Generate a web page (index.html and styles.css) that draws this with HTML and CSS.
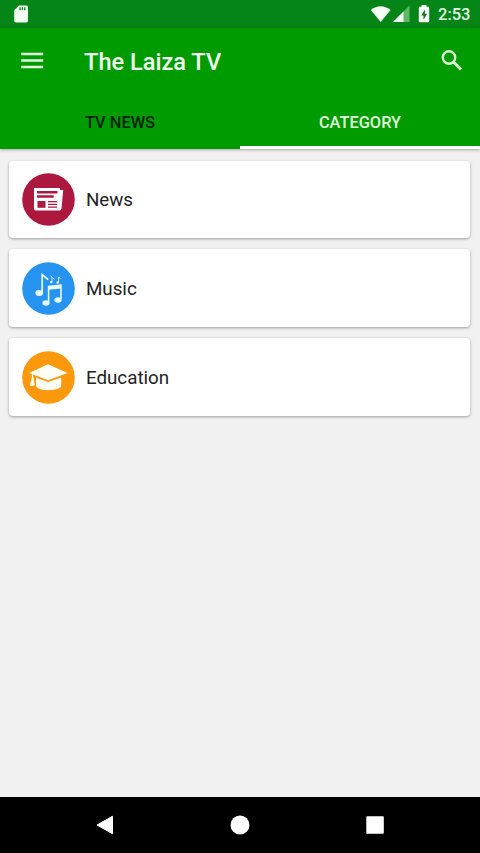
FILE: index.html
```html
<!DOCTYPE html>
<html lang="en">
<head>
<meta charset="utf-8">
<title>The Laiza TV</title>
<link rel="stylesheet" href="styles.css">
</head>
<body>
<div class="screen">
  <div class="status">
    <svg class="sd" viewBox="0 0 14 18"><path fill="#f4fff4" d="M5 .5h7.200q1.800 0 1.800 1.800v13.400q0 1.800-1.800 1.800H2q-1.800 0-1.800-1.800V5.300z"/><path stroke="#058517" stroke-width="1.300" d="M6 2.300v2.900M8.400 2.300v2.900M10.800 2.300v2.900"/></svg>
    <svg class="signals" viewBox="0 0 62 20"><path fill="#f4fff4" d="M.8 6Q10.500-1.500 20.500 6L10.700 18z"/><path fill="#5db968" d="M39.500 1.500V18H23z"/><path fill="#f4fff4" d="M33.500 7.600V18H23z"/><path fill="#f4fff4" d="M51.500 1h5v1.700h1.700q1 0 1 1V17q0 1.200-1 1.200h-8.200q-1.200 0-1.200-1.200V3.700q0-1 1-1h1.700z"/><path fill="#176b25" d="M55 5.500l-3.700 6h2.200v4.200l3.500-6h-2.200z"/></svg>
    <span class="clock">2:53</span>
  </div>
  <header class="header">
    <div class="toolbar">
      <svg class="menu" viewBox="0 0 24 18"><path stroke="#e2ffde" stroke-width="2.300" d="M1.200 2h22M1.200 8.500h22M1.200 15h22"/></svg>
      <h1 class="title">The Laiza TV</h1>
      <svg class="search" viewBox="0 0 22 22"><circle cx="8" cy="7.500" r="6.200" fill="none" stroke="#dcffd6" stroke-width="2.400"/><path stroke="#dcffd6" stroke-width="2.900" d="M12.300 11.800l7.700 7.700"/></svg>
    </div>
    <nav class="tabs">
      <div class="tab">TV NEWS</div>
      <div class="tab active">CATEGORY</div>
    </nav>
  </header>
  <main class="list">
    <div class="card">
      <svg class="icon" viewBox="0 0 53 53"><circle cx="26.500" cy="26.500" r="26.300" fill="#ad183f"/><path fill="#fff" d="M12 15h26v2h3.200l-1.700 18.500q-.2 2-2 2H14q-2 0-2-2z"/><path stroke="#ad183f" stroke-width="2.500" d="M15 19.200h20.500M15 23.500h16.700"/><path fill="#ad183f" d="M15.500 28h8v6.800h-8z"/><path stroke="#ad183f" stroke-width="1.300" d="M26 28.600h9M26 31.400h9M26 34.200h9"/></svg>
      <span>News</span>
    </div>
    <div class="card">
      <svg class="icon" viewBox="0 0 53 53"><circle cx="26.500" cy="26.500" r="26.300" fill="#2593ef"/><g fill="none" stroke="#e6faff"><path stroke-width="1.700" d="M20.200 30.500V12.500l6 5.200"/><path stroke-width="1.600" d="M26.600 40V24.500L39 23.200V37"/><path stroke-width="3" d="M26.600 26.300L39 25"/><path stroke-width=".8" d="M30 19.500v-4.500l-1.500-1M30.500 15.500l2 2M36.500 20v-5l2 1.500"/></g><g fill="#e6faff"><ellipse cx="17.200" cy="31" rx="3.900" ry="2.900"/><ellipse cx="24" cy="41" rx="3.600" ry="2.700"/><ellipse cx="36" cy="38" rx="3.600" ry="2.700"/><circle cx="29.300" cy="20" r="1.300"/><circle cx="35.700" cy="20.500" r="1.300"/></g></svg>
      <span>Music</span>
    </div>
    <div class="card">
      <svg class="icon" viewBox="0 0 53 53"><circle cx="26.500" cy="26.500" r="26.300" fill="#fb980c"/><path fill="#fffef4" d="M26 13.300L45.500 22l-19.300 7.300L7 22z"/><path fill="#fffef4" d="M14 26.800l12.200 4.200 13-4.500v9q-3.500 3.800-13 3.800T14 35.300z"/><path fill="none" stroke="#fffef4" stroke-width="1.200" d="M10.500 23v5"/><path fill="#fffef4" d="M9.800 26.500h1.700l1.300 7.500q-2.500 1.500-5 .5z"/></svg>
      <span>Education</span>
    </div>
  </main>
  <footer class="navbar">
    <svg viewBox="0 0 20 20"><path fill="#fff" stroke="#fff" stroke-linejoin="round" d="M2 10L17.500 1.300v17.400z"/></svg>
    <svg viewBox="0 0 20 20"><circle cx="10" cy="10" r="9.500" fill="#fff"/></svg>
    <svg viewBox="0 0 20 20"><rect x="1.300" y="1.300" width="17.500" height="17.500" rx=".8" fill="#fff"/></svg>
  </footer>
</div>
</body>
</html>
```
FILE: styles.css
```css
* { box-sizing: border-box; }
body { margin: 0; font-family: Roboto, sans-serif; }
svg { display: block; flex: none; }
.screen { width: 480px; height: 853px; display: flex; flex-direction: column; background: #f1f1f1; }
.status { height: 28px; background: #058517; display: flex; align-items: center; padding: 0 9px 0 14px; }
.sd { width: 14px; height: 18px; }
.signals { width: 62px; height: 20px; margin: 0 6px 0 auto; }
.clock { font-size: 16.500px; font-weight: 500; line-height: 20px; color: #e0ffe6; width: 33px; white-space: nowrap; padding-top: 2px; }
.header { height: 121px; background: #009b00; box-shadow: 0 1px 3px rgba(0, 0, 0, .3); }
.toolbar { height: 65px; display: flex; align-items: center; padding: 0 17px 0 20px; }
.menu { width: 24px; height: 18px; }
.title { margin: 0 auto 0 40px; font-size: 23.600px; line-height: 30px; font-weight: 500; color: #f0ffee; padding-top: 2px; }
.search { width: 22px; height: 22px; }
.tabs { height: 56px; display: grid; grid-template-columns: 1fr 1fr; }
.tab { display: flex; align-items: center; justify-content: center; font-size: 16.400px; font-weight: 500; color: #032203; border-bottom: 3px solid transparent; padding-top: 5px; }
.tab.active { color: #e0ffda; border-bottom-color: #fff; }
.list { flex: 1; padding: 11.600px 9.400px; display: flex; flex-direction: column; gap: 11px; }
.card { height: 77.800px; width: 461px; background: #fff; border-radius: 4px; box-shadow: 0 1px 3px rgba(0, 0, 0, .35); display: flex; align-items: center; gap: 11px; padding-left: 12.500px; font-size: 18.800px; color: #222; }
.card span { padding-top: 2px; }
.icon { width: 53px; height: 53px; }
.navbar { height: 56px; background: #000; display: flex; justify-content: space-between; padding: 18px 95px; }
.navbar svg { width: 20px; height: 20px; }
```
